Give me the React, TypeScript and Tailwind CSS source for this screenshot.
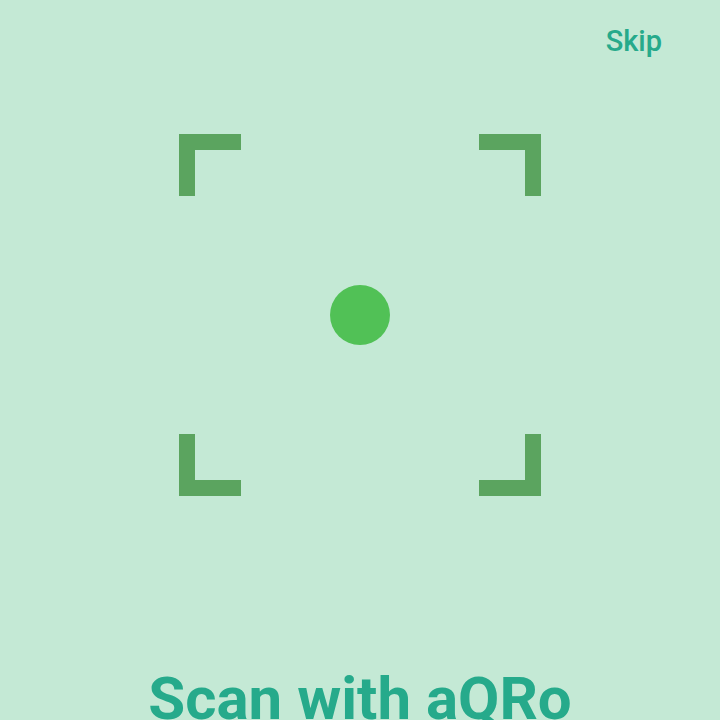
import React from "react";

const App = () => {
  return (
    <div
      className="flex h-[720px] w-full flex-col overflow-hidden bg-[#c4e9d5]"
      style={{ fontFamily: "Roboto, 'Noto Sans', sans-serif" }}
    >
      <div className="flex justify-end pr-[58px] pt-[21px]">
        <button
          type="button"
          className="text-[29px] font-medium leading-[40px] text-[#26aa8b]"
        >
          Skip
        </button>
      </div>

      <div className="mt-[73px] flex justify-center">
        <div className="grid h-[362px] w-[362px] grid-cols-[62px_1fr_62px] grid-rows-[62px_1fr_62px]">
          <div className="border-l-[16px] border-t-[16px] border-[#5ba45f]" />
          <div />
          <div className="border-r-[16px] border-t-[16px] border-[#5ba45f]" />
          <div />
          <div className="flex items-center justify-center">
            <div className="h-[60px] w-[60px] rounded-full bg-[#51c156]" />
          </div>
          <div />
          <div className="border-b-[16px] border-l-[16px] border-[#5ba45f]" />
          <div />
          <div className="border-b-[16px] border-r-[16px] border-[#5ba45f]" />
        </div>
      </div>

      <h1 className="mt-[168px] text-center text-[60px] font-bold leading-[70px] text-[#26aa8b]">
        Scan with aQRo
      </h1>
    </div>
  );
};

export default App;
